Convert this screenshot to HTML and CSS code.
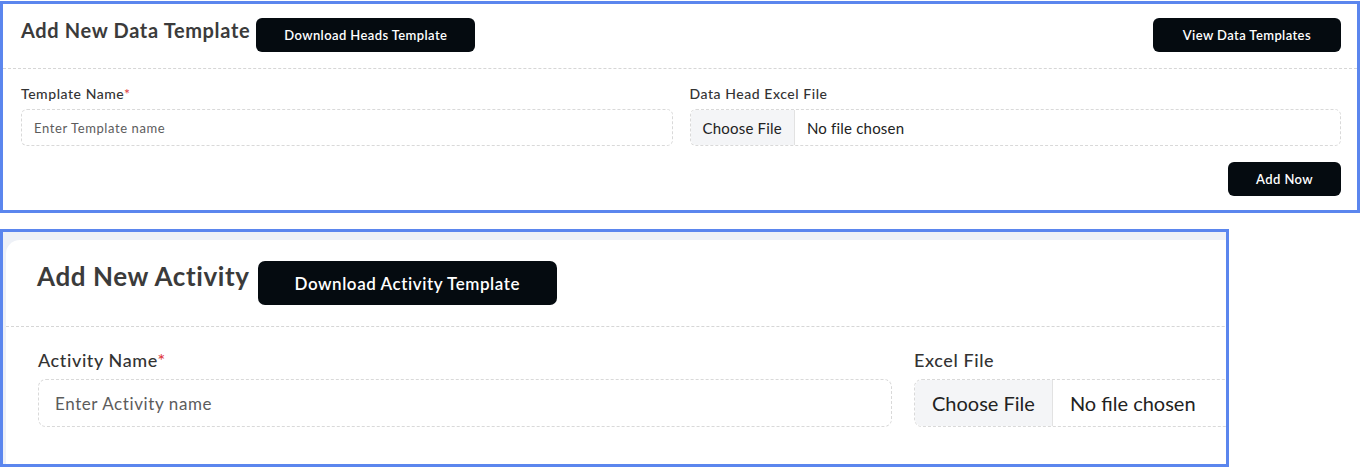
FILE: index.html
```html
<!DOCTYPE html>
<html lang="en">
<head>
<meta charset="utf-8">
<title>Templates</title>
<link rel="stylesheet" href="styles.css">
</head>
<body>
<section class="frame frame-data">
  <div class="card">
    <header class="card-head">
      <h2 class="card-title">Add New Data Template</h2>
      <button class="btn">Download Heads Template</button>
      <button class="btn btn-right btn-wide">View Data Templates</button>
    </header>
    <div class="card-body">
      <div class="form-grid">
        <div class="field">
          <label class="field-label">Template Name<span class="req">*</span></label>
          <input class="text-input" type="text" placeholder="Enter Template name">
        </div>
        <div class="field">
          <label class="field-label">Data Head Excel File</label>
          <div class="file"><span class="file-btn">Choose File</span><span class="file-name">No file chosen</span></div>
        </div>
      </div>
      <div class="actions"><button class="btn">Add Now</button></div>
    </div>
  </div>
</section>

<section class="frame frame-activity">
  <div class="card card-lg">
    <header class="card-head">
      <h2 class="card-title">Add New Activity</h2>
      <button class="btn">Download Activity Template</button>
    </header>
    <div class="card-body">
      <div class="form-grid">
        <div class="field">
          <label class="field-label">Activity Name<span class="req">*</span></label>
          <input class="text-input" type="text" placeholder="Enter Activity name">
        </div>
        <div class="field">
          <label class="field-label">Excel File</label>
          <div class="file"><span class="file-btn">Choose File</span><span class="file-name">No file chosen</span></div>
        </div>
      </div>
    </div>
  </div>
</section>
</body>
</html>
```

FILE: styles.css
```css
* { box-sizing: border-box; margin: 0; padding: 0; }

body {
  background: #ffffff;
  font-family: Lato, "Noto Sans", sans-serif;
  color: #333;
  width: 1366px;
  height: 467px;
  overflow: hidden;
}

.frame {
  border: 3px solid #5b86ee;
  overflow: hidden;
}

/* ---------- panel 1 ---------- */
.frame-data {
  width: 1360px;
  height: 212px;
  margin-top: 1px;
  background: #fff;
}

.card-head {
  display: flex;
  align-items: flex-start;
  gap: 6px;
  padding: 14px 16px 16px 18px;
  border-bottom: 1px dashed #d6d6d6;
}

.card-title {
  font-size: 20px;
  line-height: 24px;
  font-weight: 700;
  letter-spacing: 0.65px;
  color: #3b3b3b;
  white-space: nowrap;
}

.btn {
  background: #050b10;
  color: #fff;
  border: 0;
  border-radius: 6px;
  font-family: inherit;
  font-weight: 600;
  font-size: 13px;
  letter-spacing: 0.4px;
  height: 34px;
  padding: 0 28px;
  white-space: nowrap;
}

.btn-right { margin-left: auto; }
.btn-wide { padding: 0 30px; }

.card-body {
  padding: 16px 16px 14px 18px;
}

.form-grid {
  display: grid;
  grid-template-columns: 1fr 1fr;
  column-gap: 17px;
}

.field-label {
  display: block;
  font-size: 14px;
  line-height: 18px;
  letter-spacing: 0.55px;
  margin-bottom: 6px;
  color: #333;
  font-weight: 500;
}

.req { color: #e0393e; }

.text-input {
  display: block;
  width: 100%;
  height: 37px;
  border: 1px dashed #d9d9d9;
  border-radius: 6px;
  padding: 0 12px;
  font-family: inherit;
  font-size: 13px;
  letter-spacing: 0.6px;
  color: #333;
  background: #fff;
  outline: none;
}

.text-input::placeholder { color: #5c5c5c; }

.file {
  display: flex;
  height: 37px;
  border: 1px dashed #d9d9d9;
  border-radius: 6px;
  overflow: hidden;
  font-size: 15px;
  letter-spacing: 0.2px;
  color: #222;
}

.file-btn {
  display: flex;
  align-items: center;
  padding: 0 12px;
  background: #f4f5f7;
  border-right: 1px solid #e2e2e2;
}

.file-name {
  display: flex;
  align-items: center;
  padding: 0 12px;
}

.actions {
  display: flex;
  justify-content: flex-end;
  margin-top: 16px;
}

/* ---------- panel 2 (larger view) ---------- */
.frame-activity {
  width: 1229px;
  height: 238px;
  margin-top: 16px;
  background: #eef1f7;
  padding: 8px 0 0 3px;
}

.card-lg {
  width: 1794px;
  min-height: 300px;
  background: #fff;
  border-top-left-radius: 14px;
}

.card-lg .card-head {
  gap: 8px;
  padding: 21px 32px 21px 31px;
}

.card-lg .card-title {
  font-size: 26px;
  line-height: 31px;
  letter-spacing: 0.6px;
}

.card-lg .btn {
  height: 44px;
  font-size: 17px;
  letter-spacing: 0.55px;
  padding: 0 37px;
  border-radius: 7px;
}

.card-lg .card-body {
  padding: 21px 32px 0 32px;
}

.card-lg .form-grid {
  grid-template-columns: 854px 854px;
  column-gap: 22px;
}

.card-lg .field-label {
  font-size: 18px;
  line-height: 24px;
  letter-spacing: 0.6px;
  margin-bottom: 7px;
}

.card-lg .text-input {
  height: 48px;
  padding: 0 16px;
  font-size: 17px;
  letter-spacing: 0.6px;
  border-radius: 8px;
}

.card-lg .file {
  height: 48px;
  font-size: 20px;
  letter-spacing: 0;
  border-radius: 8px;
}

.card-lg .file-btn,
.card-lg .file-name {
  padding: 0 17px;
}
```
